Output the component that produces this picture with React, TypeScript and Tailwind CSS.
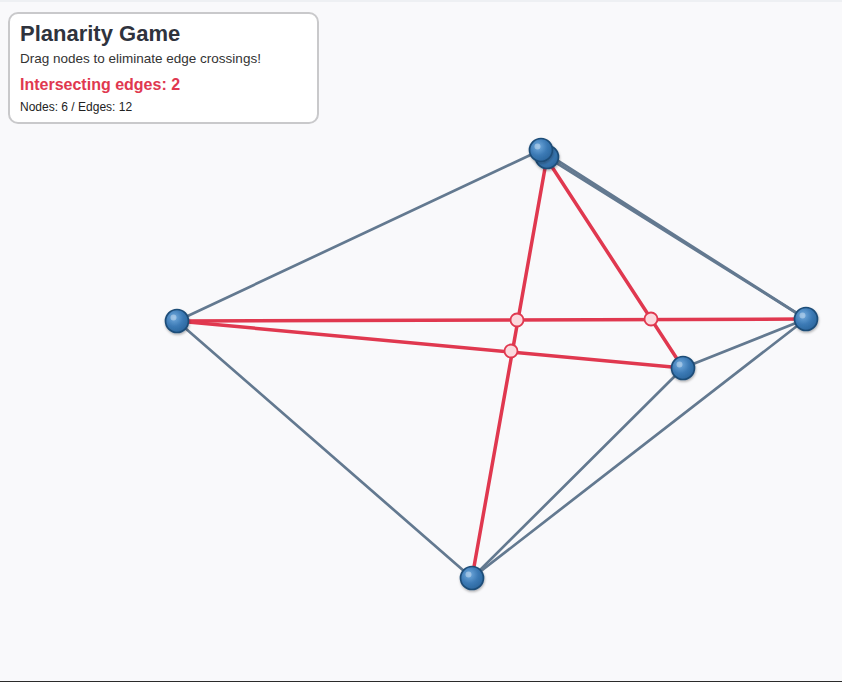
import React from "react";

type Pt = { id: string; x: number; y: number };

const NODES: Pt[] = [
  { id: "b", x: 547, y: 157 },
  { id: "a", x: 541, y: 150 },
  { id: "c", x: 177, y: 321 },
  { id: "d", x: 806, y: 319 },
  { id: "e", x: 683, y: 368 },
  { id: "f", x: 472, y: 578 },
];

const pos = (id: string) => NODES.find((n) => n.id === id)!;

const GRAY_EDGES: [string, string][] = [
  ["a", "b"],
  ["c", "a"],
  ["c", "f"],
  ["a", "d"],
  ["b", "d"],
  ["e", "d"],
  ["f", "e"],
  ["f", "d"],
];

const RED_EDGES: [string, string][] = [
  ["c", "d"],
  ["c", "e"],
  ["f", "b"],
  ["a", "e"],
];

const CROSSINGS = [
  { x: 517, y: 320 },
  { x: 651, y: 319 },
  { x: 511, y: 351 },
];

function Graph() {
  return (
    <svg className="absolute inset-0 h-full w-full" viewBox="0 0 842 682">
      <defs>
        <radialGradient id="node-fill" cx="38%" cy="35%" r="70%">
          <stop offset="0%" stopColor="#72abde" />
          <stop offset="55%" stopColor="#3c7ab5" />
          <stop offset="100%" stopColor="#2a659c" />
        </radialGradient>
        <filter id="node-shadow" x="-50%" y="-50%" width="200%" height="200%">
          <feDropShadow dx="0.5" dy="1.5" stdDeviation="1.2" floodColor="#000" floodOpacity="0.3" />
        </filter>
      </defs>

      {GRAY_EDGES.map(([p, q]) => {
        const s = pos(p);
        const t = pos(q);
        return (
          <line
            key={p + q}
            x1={s.x}
            y1={s.y}
            x2={t.x}
            y2={t.y}
            stroke="#637990"
            strokeWidth={2.7}
            strokeLinecap="round"
          />
        );
      })}
      {RED_EDGES.map(([p, q]) => {
        const s = pos(p);
        const t = pos(q);
        return (
          <line
            key={p + q}
            x1={s.x}
            y1={s.y}
            x2={t.x}
            y2={t.y}
            stroke="#e0384f"
            strokeWidth={3.5}
            strokeLinecap="round"
          />
        );
      })}

      {CROSSINGS.map((c, i) => (
        <circle key={i} cx={c.x} cy={c.y} r={6.5} fill="#fbd9de" stroke="#e0384f" strokeWidth={1.8} />
      ))}

      {NODES.map((n) => (
        <g key={n.id} filter="url(#node-shadow)">
          <circle cx={n.x} cy={n.y} r={11.5} fill="url(#node-fill)" stroke="#1f4d78" strokeWidth={1.7} />
          <circle cx={n.x - 3.5} cy={n.y - 3.5} r={3} fill="#ffffff" opacity={0.35} />
        </g>
      ))}
    </svg>
  );
}

export default function App() {
  return (
    <main
      className="relative h-[682px] w-[842px] overflow-hidden bg-[#f9f9fb]"
      style={{ fontFamily: '"Liberation Sans", Arial, sans-serif' }}
    >
      <div className="h-[2px] w-full bg-[#eef0f3]" />
      <Graph />

      <div className="absolute left-[8px] top-[12px] h-[112px] w-[311px] rounded-[10px] border-2 border-[#c9c9cb] bg-white px-[10px] pt-[7px]">
        <h1 className="text-[22px] font-bold leading-[26px] text-[#2f333d]">Planarity Game</h1>
        <p className="mt-[4px] text-[13.5px] leading-[16px] text-[#333]">
          Drag nodes to eliminate edge crossings!
        </p>
        <p className="mt-[9px] text-[16px] font-bold leading-[18px] text-[#e0384f]">
          Intersecting edges: 2
        </p>
        <p className="mt-[6px] text-[12px] leading-[14px] text-[#222]">Nodes: 6 / Edges: 12</p>
      </div>

      <div className="absolute inset-x-0 bottom-0 h-px bg-[#2a2a2a]" />
    </main>
  );
}
